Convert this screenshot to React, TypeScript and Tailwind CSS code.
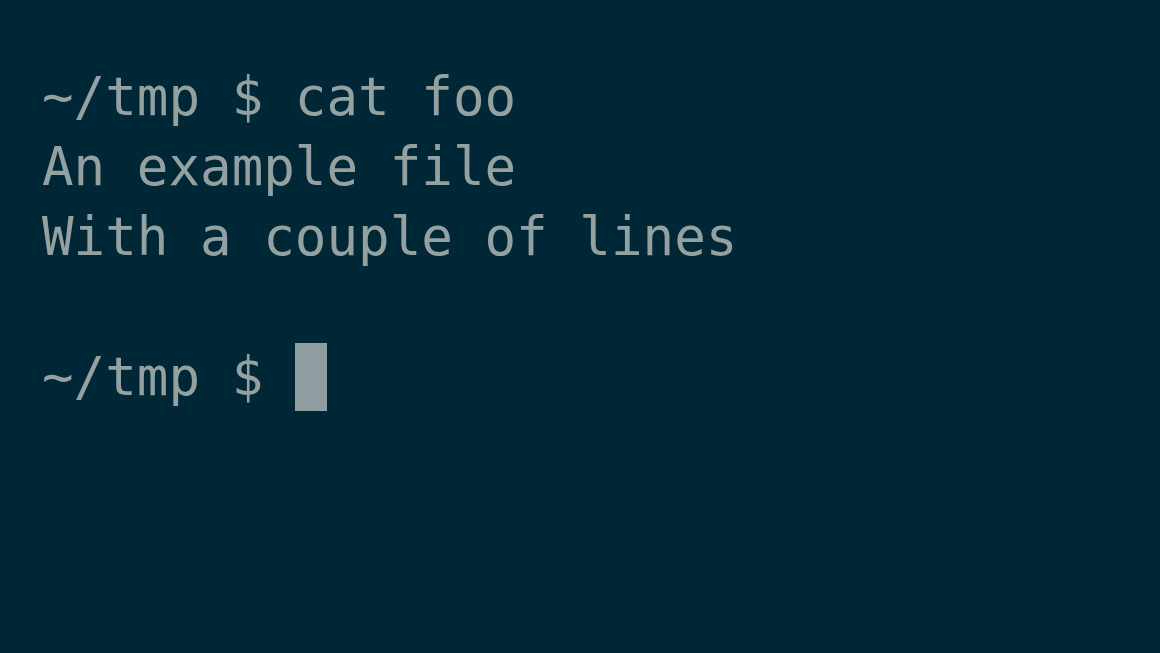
import React from "react";

const lines = ["~/tmp $ cat foo", "An example file", "With a couple of lines", ""];

const App = () => {
  return (
    <div
      className="w-[1160px] h-[653px] bg-[#002735] text-[#93a1a1] pl-[42px] pt-[62px] text-[52.5px] leading-[70px] whitespace-pre"
      style={{ fontFamily: '"DejaVu Sans Mono", "Liberation Mono", monospace' }}
    >
      {lines.map((line, i) => (
        <div key={i} className="h-[70px]">
          {line}
        </div>
      ))}
      <div className="h-[70px] flex items-center">
        <span>~/tmp $ </span>
        <span className="inline-block w-[32px] h-[68px] bg-[#8f9ca0]" />
      </div>
    </div>
  );
};

export default App;
